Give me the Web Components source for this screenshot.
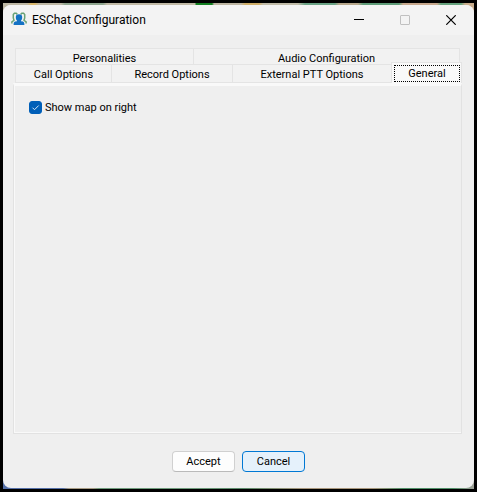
<!DOCTYPE html>
<html lang="en">
<head>
<meta charset="utf-8">
<title>ESChat Configuration</title>
<style>
html, body { height: 100%; margin: 0; }
body { background: #000; color: #000; font: 11px/14px Roboto, "Liberation Sans", sans-serif; }
</style>
</head>
<body>
<config-window>
  <title-bar slot="title">ESChat Configuration</title-bar>
  <tab-strip slot="tabs">
    <tab-item slot="back" style="--w:178">Personalities</tab-item>
    <tab-item slot="back" style="--w:267">Audio Configuration</tab-item>
    <tab-item slot="front" style="--w:96">Call Options</tab-item>
    <tab-item slot="front" style="--w:121">Record Options</tab-item>
    <tab-item slot="front" style="--w:159">External PTT Options</tab-item>
    <tab-item slot="front" selected style="--w:71">General</tab-item>
  </tab-strip>
  <check-option checked>Show map on right</check-option>
  <push-button slot="actions">Accept</push-button>
  <push-button slot="actions" primary>Cancel</push-button>
</config-window>
<script>
function define(name, html, setup) {
  customElements.define(name, class extends HTMLElement {
    constructor() {
      super();
      this.attachShadow({ mode: "open" }).innerHTML = html;
    }
    connectedCallback() { if (setup) setup(this, this.shadowRoot); }
  });
}

define("config-window", `
<style>
:host { display: block; box-sizing: border-box; height: 100vh; padding: 3px; }
.desk { box-sizing: border-box; height: 100%; padding: 2px 0 1px;
  background: linear-gradient(90deg, #5570a8 0 60px, #a89c84 66px 90px, #6f9b7c 96px 190px, #5a8a6a 240px, #a8967c 300px 370px, #4f9068 400px 450px, #a0a098) bottom / 100% 12px no-repeat,
    linear-gradient(90deg, #bdb7a4 0 24px, #d9b76c 28px 32px, #bdb7a4 36px 58px, #8ea58e 62px 100px, #c0b9a5 104px 192px, #127f20 193px 209px, #bdb5a2 211px 238px, #cfae68 242px 256px, #c0bba8 260px 295px, #6aa385 302px 332px, #b7a78b 336px 355px, #5e9c78 360px 396px, #c6a78c 400px 434px, #65a27d 438px 458px, #c9ad8c 462px); }
.window { display: flex; flex-direction: column; height: 100%; overflow: hidden; border-radius: 8px; background: #efefef; }
main { flex: 1; display: flex; flex-direction: column; padding: 13px 12px 0 10px; }
.panel { flex: 1; padding: 14px 15px; border: 1px solid #e2e2e2; border-top: 3px solid #f9f9f9; box-shadow: inset 1px 0 #f9f9f9, inset 0 -1px #f9f9f9; }
footer { display: flex; justify-content: center; gap: 7px; padding: 17px 0 16px; }
</style>
<div class="desk"><div class="window">
  <slot name="title"></slot>
  <main><slot name="tabs"></slot><section class="panel" role="tabpanel"><slot></slot></section></main>
  <footer><slot name="actions"></slot></footer>
</div></div>`);

define("title-bar", `
<style>
:host { display: flex; align-items: center; height: 30px; padding: 0 8px; background: #f3f3f3; font: 12px/16px Roboto, "Open Sans", sans-serif; }
h1 { flex: 1; margin: 0 0 0 5px; font: inherit; }
button { display: grid; place-items: center; width: 30px; height: 28px; margin-left: 16px; padding: 0; border: 0; background: none; color: #000; }
button:disabled { color: #c0c0c0; }
svg { display: block; fill: none; stroke: currentColor; }
</style>
<svg width="16" height="16" viewBox="0 0 16 16" aria-hidden="true">
  <g stroke="#69a276" stroke-width="1.5">
    <path d="M.9 11.5V9.8L3 8.3 2.3 6V2.6L3.4 1.3H5.2L6.3 2.4"/>
    <path d="M15.1 11.5V9.8L13 8.3 13.7 6V2.6L12.6 1.3H10.8L9.7 2.4"/>
  </g>
  <path stroke="none" fill="#1472c4" d="M8 2.2C5.7 2.2 4.8 3.1 4.8 5.2S5.5 8 6 8.6V9.2L4 9.6C3.1 10 2.6 10.8 2.6 13H13.4C13.4 10.8 12.9 10 12 9.6L10 9.2V8.6C10.5 8 11.2 7.3 11.2 5.2S10.3 2.2 8 2.2Z"/>
</svg>
<h1><slot></slot></h1>
<button aria-label="Minimize"><svg width="10" height="10"><path d="M0 4.5H10"/></svg></button>
<button aria-label="Maximize" disabled><svg width="10" height="10"><rect x=".5" y=".5" width="9" height="9" rx=".5"/></svg></button>
<button aria-label="Close"><svg width="10" height="10"><path d="M.3.3 9.7 9.7M9.7.3.3 9.7" stroke-width="1.2"/></svg></button>`);

define("tab-strip", `
<style>
:host { display: block; }
.row { display: flex; margin: 0 2px; height: 16px; }
.front { height: 19px; margin-right: 0; }
</style>
<div role="tablist">
  <div class="row" role="presentation"><slot name="back"></slot></div>
  <div class="row front" role="presentation"><slot name="front"></slot></div>
</div>`);

define("tab-item", `
<style>
:host { display: flex; flex: var(--w) 1 0; min-width: 0; }
button { flex: 1; display: flex; justify-content: center; align-items: center; min-width: 0; padding: 4px 0 0; border: solid #e4e4e4; border-width: 1px 0 0 1px; background: #f2f2f2; color: inherit; font: inherit; white-space: nowrap; }
:host([slot="front"]) button { padding: 2px 0 0; border-bottom-width: 1px; }
:host([selected]) { margin: -2px 0 0; z-index: 1; }
:host([slot="front"][selected]) button { padding: 0 1px 0 2px; border-width: 1px 1px 0; background: #f9f9f9; }
span { flex: 1; text-align: center; }
:host([selected]) span { border: 1px dotted #000; line-height: 15px; }
</style>
<button role="tab"><span><slot></slot></span></button>`, (host, root) => {
  const button = root.querySelector("button");
  button.setAttribute("aria-selected", host.hasAttribute("selected"));
  if (host.slot === "back" && !host.nextElementSibling.matches('[slot="back"]'))
    button.style.borderRightWidth = "1px";
});

define("check-option", `
<style>
:host { display: block; }
label { display: inline-flex; align-items: center; gap: 3px; }
input { appearance: none; box-sizing: border-box; width: 13px; height: 13px; margin: 0; border: 1px solid #868686; border-radius: 3px; background: #fff; }
input:checked { border-color: #005fb8; background: #005fb8 }
.box { display: grid; }
.box > * { grid-area: 1 / 1; }
.text { padding-top: 1px; }
svg { pointer-events: none; fill: none; stroke: #d8e8f5; display: none; }
input:checked + svg { display: block; }
</style>
<label><span class="box"><input type="checkbox"><svg width="13" height="13" aria-hidden="true"><path d="M3.5 6.7 5.5 8.7 9.7 4.5"/></svg></span><span class="text"><slot></slot></span></label>`, (host, root) => {
  root.querySelector("input").checked = host.hasAttribute("checked");
});

define("push-button", `
<style>
:host { display: block; }
button { min-width: 63px; height: 21px; padding: 0 8px; border: 1px solid #d0d0d0; border-bottom-color: #bababa; border-radius: 4px; background: #fdfdfd; color: inherit; font: inherit; }
:host([primary]) button { border-color: #0078d4; background: #e5f1fb; }
</style>
<button type="button"><slot></slot></button>`);
</script>
</body>
</html>
